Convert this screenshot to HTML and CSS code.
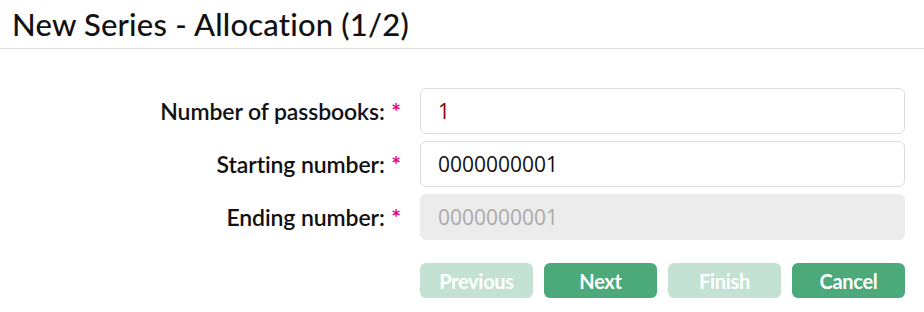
FILE: index.html
```html
<!DOCTYPE html>
<html lang="en">
    <head>
        <meta charset="UTF-8" />
        <title>New Series - Allocation</title>
        <link rel="stylesheet" href="styles.css">
    </head>
    <body>
        <div id="header">
            <h1>New Series - Allocation (1/2)</h1>
        </div>
        <div id="content">
            <form class="series-form">
                <label for="count">Number of passbooks: <span class="req">*</span></label>
                <input id="count" type="text" class="value-red" value="1" />

                <label for="start">Starting number: <span class="req">*</span></label>
                <input id="start" type="text" value="0000000001" />

                <label for="end">Ending number: <span class="req">*</span></label>
                <input id="end" type="text" value="0000000001" disabled />

                <div class="buttons">
                    <button type="button" disabled>Previous</button>
                    <button type="button">Next</button>
                    <button type="button" disabled>Finish</button>
                    <button type="button">Cancel</button>
                </div>
            </form>
        </div>
    </body>
</html>
```

FILE: styles.css
```css
html, body {
    margin: 0;
    padding: 0;
    background: #ffffff;
    font-family: 'Lato', 'Open Sans', sans-serif;
    color: #111111;
}

    #header {
        height: 49px;
        border-bottom: 1px solid #dedede;
        box-sizing: border-box;
        padding: 0 12px;
        display: flex;
        align-items: center;
    }
    #header h1 {
        margin: 0;
        font-size: 31px;
        font-weight: 500;
        letter-spacing: 0.2px;
    }

    #content {
        padding: 39px 19px 0 12px;
    }

    .series-form {
        display: grid;
        grid-template-columns: 1fr 485px;
        column-gap: 16px;
        row-gap: 7px;
        align-items: center;
    }
    .series-form label {
        text-align: right;
        font-size: 23px;
        font-weight: 600;
        letter-spacing: -0.1px;
        padding-right: 3px;
    }
    .series-form label .req {
        color: #e6007e;
        font-weight: 700;
        margin-left: 1px;
    }
    .series-form input {
        height: 46px;
        box-sizing: border-box;
        border: 1px solid #dcdcdc;
        border-radius: 6px;
        padding: 0 17px;
        font-family: 'Open Sans', sans-serif;
        font-size: 21px;
        color: #111111;
        background: #ffffff;
        outline: none;
    }
    .series-form input.value-red {
        color: #800000;
    }
    .series-form input:disabled {
        background: #ececec;
        border-color: #ececec;
        color: #aaaaaa;
    }

    .buttons {
        grid-column: 2;
        display: flex;
        gap: 11px;
        margin-top: 16px;
    }
    .buttons button {
        width: 113px;
        height: 35px;
        border: none;
        border-radius: 6px;
        background: #4ca97a;
        color: #ffffff;
        font-family: 'Lato', sans-serif;
        font-weight: 700;
        font-size: 20px;
        letter-spacing: -0.3px;
        padding: 0;
    }
    .buttons button:disabled {
        background: #c3e2d3;
    }
```
